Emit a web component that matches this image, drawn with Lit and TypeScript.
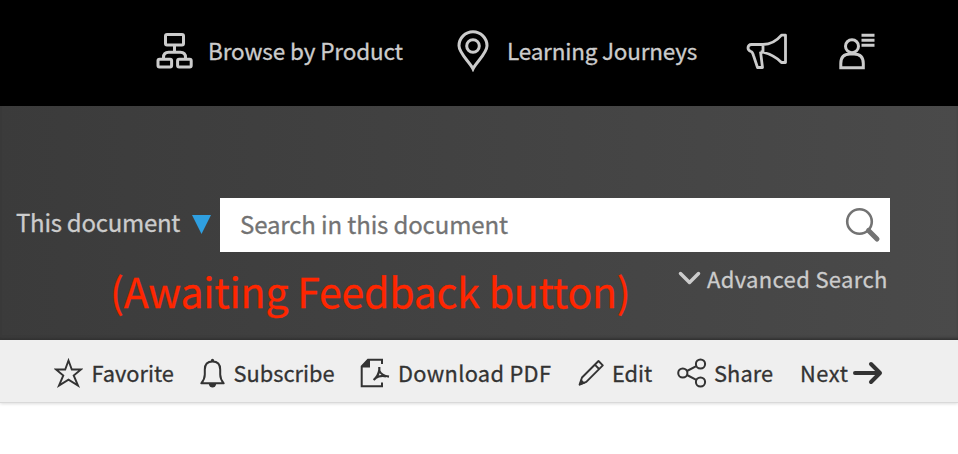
import { LitElement, html, css, svg } from "lit";

const hierarchy = svg`<g stroke-width="3"><rect x="17.500" y="2.500" width="18" height="10.600" rx="1.500"/><rect x="10" y="27.300" width="13.600" height="7.800" rx="1.500"/><rect x="29.600" y="27.300" width="13.600" height="7.800" rx="1.500"/><path d="M26.500 13v7M15.500 27v-1.600q0-5.200 5.200-5.200h11.600q5.200 0 5.200 5.200V27"/></g>`;

class AppRoot extends LitElement {
  static styles = css`
    :host { display: block; height: 454px; overflow: hidden; background: #fff; font-family: "Noto Sans CJK SC", "Open Sans", sans-serif; white-space: nowrap; -webkit-text-stroke: 0.3px currentColor; }
    svg { display: block; flex: none; fill: none; stroke: currentColor; }
    .top { box-sizing: border-box; height: 106px; padding: 0 0 5px 156px; display: flex; align-items: center; background: #000; color: #ccc; font-size: 22.5px; line-height: 30px; }
    .top span { margin-top: -1px; }
    .top .browse { width: 195px; margin-left: 14px; margin-right: 54px; letter-spacing: -0.13px; }
    .top .learn { width: 189px; margin-left: 18px; margin-right: 50px; letter-spacing: -0.2px; }
    .user { margin-left: 51px; }
    .band { box-sizing: border-box; height: 234px; padding-top: 92px; background: linear-gradient(90deg, #3b3b3b, #4a4a4a); color: #ccc; box-shadow: inset 0 -3px 3px -1px #333; }
    .search { display: flex; height: 54px; }
    .scope { width: 176px; margin-left: 16px; font-size: 24px; line-height: 48px; letter-spacing: -0.27px; }
    .tri { width: 19px; height: 19px; margin: 17px 9px 0 0; background: #2f9fe0; clip-path: polygon(0 0, 100% 0, 50% 100%); }
    .field { box-sizing: border-box; width: 670px; padding: 0 9px 0 20px; background: #fff; color: #737373; display: flex; align-items: center; justify-content: space-between; font-size: 24px; letter-spacing: -0.13px; }
    .field span { padding-bottom: 4px; }
    .under { display: flex; height: 88px; }
    .note { width: 567px; margin: 10px 0 0 110px; color: #ff2600; font-size: 41px; line-height: 56px; letter-spacing: -0.22px; }
    .chev { margin: 19px 6px 0 1px; }
    .adv { font-size: 22px; line-height: 30px; margin-top: 11px; letter-spacing: 0.35px; }
    .bar { box-sizing: border-box; height: 63px; padding: 3px 0 0 54px; display: flex; align-items: center; background: #efefef; border-bottom: 1px solid #d9d9d9; box-shadow: 0 1px 3px #0002; color: #333; font-size: 21.8px; line-height: 30px; }
    .fav { width: 107px; margin-left: 8.5px; }
    .sub { width: 126px; margin-left: 8px; }
    .pdf { width: 180px; margin-left: 8.5px; letter-spacing: 0.32px; }
    .edit { width: 65px; margin-left: 7px; }
    .share { width: 86px; margin-left: 7px; letter-spacing: 0.1px; }
    .next { width: 53px; letter-spacing: 0.6px; }
  `;
  render() {
    return html`
      <header class="top">
        <svg width="38" height="38" viewBox="8 0 38 38">${hierarchy}</svg>
        <span class="browse">Browse by Product</span>
        <svg width="32" height="42" viewBox="0 0 32 42" stroke-width="3"><path d="M16 38.800C13.200 32.500 2 23.500 2 15.800a14 14 0 0 1 28 0C30 23.500 18.800 32.500 16 38.800Z"/><circle cx="16" cy="16" r="6.300"/></svg>
        <span class="learn">Learning Journeys</span>
        <svg width="42" height="38" viewBox="0 0 42 38" stroke-width="2.800" stroke-linejoin="round"><path d="M17 12.500C25 12.500 31 8.500 35.500 3.200H39.500V30.500H35.500C31 25.500 25 22 14.500 19.500M17 12.500V20M17 12.500H5.500Q2 12.500 2 16Q2 18.300 5 19.500Q6.500 20 7.500 23.500L11.500 35.500H16.500L14.500 19.500"/></svg>
        <svg class="user" width="38" height="38" viewBox="0 0 38 38" stroke-width="3"><circle cx="13" cy="14.200" r="6.500"/><path d="M1.800 35.700V31.500Q1.800 22 11 22H15Q24.300 22 24.300 31.500V35.700ZM22.500 3.300H35.500M22.500 8.300H35.500M22.500 13.300H35.500"/></svg>
      </header>
      <section class="band">
        <div class="search">
          <span class="scope">This document</span><i class="tri"></i>
          <div class="field"><span>Search in this document</span>
            <svg width="36" height="36" viewBox="0 0 36 36" stroke="#666"><circle cx="14.500" cy="14.500" r="12.300" stroke-width="2.600"/><path d="M23.500 23.500L32 32" stroke-width="5" stroke-linecap="round"/></svg>
          </div>
        </div>
        <div class="under">
          <div class="note">(Awaiting Feedback button)</div>
          <svg class="chev" width="23" height="16" viewBox="0 0 23 16" stroke-width="3.500" stroke-linejoin="round" stroke-linecap="round"><path d="M2.500 2.500L11.500 11.500L20.500 2.500"/></svg>
          <span class="adv">Advanced Search</span>
        </div>
      </section>
      <nav class="bar">
        <svg width="29" height="30" viewBox="0 0 29 30" stroke-width="1.900"><path d="M14.500 2.500L17.800 11.500H27L19.700 17.500L24 27.500L14.500 21.600L5 27.500L9.300 17.500L2 11.500H11.200Z"/></svg>
        <span class="fav">Favorite</span>
        <svg width="27" height="30" viewBox="0 0 27 30" stroke-width="2" stroke-linejoin="round"><path d="M2.300 25.300C5 22 5.800 20 5.800 16.500V11.500C5.800 6.500 8.500 3.500 13.500 3.500S21.200 6.500 21.200 11.500V16.500C21.200 20 22 22 24.700 25.300Z"/><path d="M9.800 26H17.200Q16.500 29.500 13.500 29.500T9.800 26ZM11.700 3Q12 .8 13.500 .8T15.300 3Z" fill="currentColor" stroke="none"/></svg>
        <span class="sub">Subscribe</span>
        <svg width="30" height="30" viewBox="0 0 30 30" stroke-width="2"><path d="M22 6V1.800H8L1.700 8.500V28.200H22V24.500"/><path d="M1 9L8.500 1H10V9.500H1Z" fill="currentColor" stroke="none"/><path d="M19.300 9V12.500Q21 17.500 29 18.600M19.300 12Q18.500 18 13.600 22M15 20.300Q20 17 26 18.300" stroke-width="2.200"/></svg>
        <span class="pdf">Download PDF</span>
        <svg width="27" height="28" viewBox="0 0 27 28" stroke-width="1.900" stroke-linejoin="round"><path d="M1.600 25.600L4 18.500L20.500 2L24.800 6.300L8.300 22.800ZM16.800 5.700L21.100 10"/><path d="M1 26.400L3 20L7.200 24.200Z" fill="currentColor" stroke="none"/></svg>
        <span class="edit">Edit</span>
        <svg width="30" height="30" viewBox="0 0 30 30" stroke-width="2"><circle cx="5.800" cy="15" r="4.600"/><circle cx="23.500" cy="6" r="4.600"/><circle cx="23.500" cy="24" r="4.600"/><path d="M10 13L19.300 8.100M10 17L19.300 21.900"/></svg>
        <span class="share">Share</span>
        <span class="next">Next</span>
        <svg width="30" height="24" viewBox="0 0 30 24" stroke-width="4" stroke-linecap="round" stroke-linejoin="round"><path d="M2 12H26M18 3L27 12L18 21"/></svg>
      </nav>`;
  }
}
customElements.define("app-root", AppRoot);
